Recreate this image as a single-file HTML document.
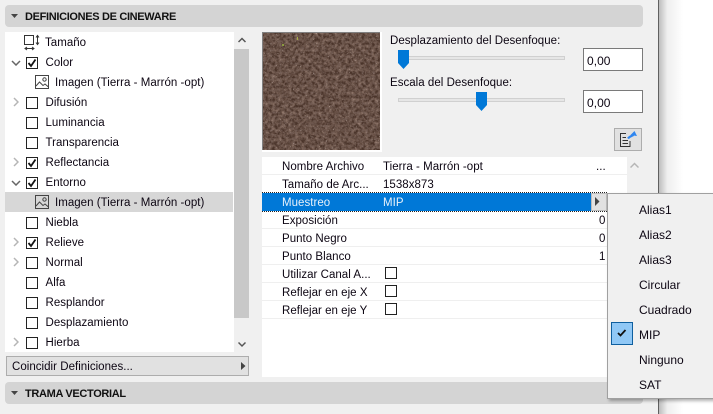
<!DOCTYPE html>
<html><head><meta charset="utf-8">
<style>
html,body{margin:0;padding:0}
body{width:713px;height:414px;overflow:hidden;position:relative;background:#fff;font-family:"Liberation Sans",sans-serif;font-size:11.5px;color:#0c0512}
div,span,svg{position:absolute;display:block}
.t{white-space:nowrap;line-height:14px;letter-spacing:.03px;margin-top:1px}
.hd{background:#d4d4d4;border-radius:4px;height:22px;left:5px;width:638px}
.hb{font-weight:bold;font-size:11px;left:25px;letter-spacing:-.33px;color:#111;line-height:14px;white-space:nowrap;margin-top:1px}
.cb{width:10px;height:10px;border:1px solid #222;background:#fff;left:26px;margin-top:1px}
.rl{left:262px;width:365px;height:1px;background:#efefef}
.n{left:282px}.v{left:383px}
.t.m{left:639px;font-size:12px;letter-spacing:0;margin-top:0}
</style></head><body>
<div style="left:0;top:0;width:658px;height:414px;background:#f0f0f0"></div>
<div style="left:658px;top:0;width:1px;height:414px;background:#606060"></div>
<div style="left:659px;top:0;width:24px;height:414px;background:linear-gradient(90deg,#bdbdbd,#efefef 35%,#fff)"></div>

<div class="hd" style="top:5px"></div>
<svg style="left:11px;top:14px" width="7" height="5"><path d="M0 0H7L3.5 4Z" fill="#444"/></svg>
<div class="hb" style="top:9px">DEFINICIONES DE CINEWARE</div>

<div style="left:5px;top:32px;width:229px;height:320px;background:#fff"></div>
<div style="left:234px;top:32px;width:15px;height:320px;background:#f0f0f0"></div>
<div style="left:234px;top:49px;width:15px;height:269px;background:#c8c8c8"></div>
<svg style="left:238px;top:37px" width="8" height="7"><path d="M.5 5L4 1.500L7.500 5" fill="none" stroke="#555" stroke-width="1.500"/></svg>
<svg style="left:238px;top:341px" width="8" height="7"><path d="M.5 1.500L4 5L7.500 1.500" fill="none" stroke="#555" stroke-width="1.500"/></svg>
<div style="left:5px;top:192px;width:228px;height:20px;background:#d7d7d7"></div>

<svg style="left:24px;top:34px" width="17" height="17" fill="none" stroke="#333"><rect x=".5" y="1.500" width="9" height="9"/><path d="M13.500 2V10M12 3.500L13.500 1.500L15 3.500M12 8.500L13.500 10.500L15 8.500M1 14.500H10M3 13L1 14.500L3 16M8 13L10 14.500L8 16"/></svg>
<div class="t" style="left:45px;top:35px">Tamaño</div>

<svg style="left:11px;top:60px" width="10" height="6"><path d="M1 1L5 5L9 1" fill="none" stroke="#666" stroke-width="1.500"/></svg>
<div class="cb" style="top:56px"></div>
<svg style="left:27px;top:58px" width="10" height="10"><path d="M1.500 5L4 8L8.500 1.500" fill="none" stroke="#111" stroke-width="1.800"/></svg>
<div class="t" style="left:45.500px;top:55px">Color</div>

<svg style="left:35px;top:75px" width="15" height="15" fill="none" stroke="#444"><rect x=".5" y=".5" width="13" height="13"/><circle cx="9.500" cy="4.500" r="1.700"/><path d="M1 11L4.500 7L8 10.500L10 9L13.500 12"/></svg>
<div class="t" style="left:55px;top:75px">Imagen (Tierra - Marrón -opt)</div>

<svg style="left:13px;top:97px" width="6" height="10"><path d="M1 1L5 5L1 9" fill="none" stroke="#b5b5b5" stroke-width="1.500"/></svg>
<div class="cb" style="top:96px"></div>
<div class="t" style="left:45.500px;top:95px">Difusión</div>

<div class="cb" style="top:116px"></div>
<div class="t" style="left:45.500px;top:115px">Luminancia</div>

<div class="cb" style="top:136px"></div>
<div class="t" style="left:45.500px;top:135px">Transparencia</div>

<svg style="left:13px;top:157px" width="6" height="10"><path d="M1 1L5 5L1 9" fill="none" stroke="#b5b5b5" stroke-width="1.500"/></svg>
<div class="cb" style="top:156px"></div>
<svg style="left:27px;top:158px" width="10" height="10"><path d="M1.500 5L4 8L8.500 1.500" fill="none" stroke="#111" stroke-width="1.800"/></svg>
<div class="t" style="left:45.500px;top:155px">Reflectancia</div>

<svg style="left:11px;top:180px" width="10" height="6"><path d="M1 1L5 5L9 1" fill="none" stroke="#666" stroke-width="1.500"/></svg>
<div class="cb" style="top:176px"></div>
<svg style="left:27px;top:178px" width="10" height="10"><path d="M1.500 5L4 8L8.500 1.500" fill="none" stroke="#111" stroke-width="1.800"/></svg>
<div class="t" style="left:45.500px;top:175px">Entorno</div>

<svg style="left:35px;top:195px" width="15" height="15" fill="none" stroke="#444"><rect x=".5" y=".5" width="13" height="13"/><circle cx="9.500" cy="4.500" r="1.700"/><path d="M1 11L4.500 7L8 10.500L10 9L13.500 12"/></svg>
<div class="t" style="left:55px;top:195px">Imagen (Tierra - Marrón -opt)</div>

<div class="cb" style="top:216px"></div>
<div class="t" style="left:45.500px;top:215px">Niebla</div>

<svg style="left:13px;top:237px" width="6" height="10"><path d="M1 1L5 5L1 9" fill="none" stroke="#b5b5b5" stroke-width="1.500"/></svg>
<div class="cb" style="top:236px"></div>
<svg style="left:27px;top:238px" width="10" height="10"><path d="M1.500 5L4 8L8.500 1.500" fill="none" stroke="#111" stroke-width="1.800"/></svg>
<div class="t" style="left:45.500px;top:235px">Relieve</div>

<svg style="left:13px;top:257px" width="6" height="10"><path d="M1 1L5 5L1 9" fill="none" stroke="#b5b5b5" stroke-width="1.500"/></svg>
<div class="cb" style="top:256px"></div>
<div class="t" style="left:45.500px;top:255px">Normal</div>

<div class="cb" style="top:276px"></div>
<div class="t" style="left:45.500px;top:275px">Alfa</div>

<div class="cb" style="top:296px"></div>
<div class="t" style="left:45.500px;top:295px">Resplandor</div>

<div class="cb" style="top:316px"></div>
<div class="t" style="left:45.500px;top:315px">Desplazamiento</div>

<svg style="left:13px;top:337px" width="6" height="10"><path d="M1 1L5 5L1 9" fill="none" stroke="#b5b5b5" stroke-width="1.500"/></svg>
<div class="cb" style="top:336px"></div>
<div class="t" style="left:45.500px;top:335px">Hierba</div>

<div style="left:6px;top:356px;width:241px;height:18px;background:#e1e1e1;border:1px solid #adadad"></div>
<div class="t" style="left:12px;top:359px">Coincidir Definiciones...</div>
<svg style="left:241px;top:362px" width="5" height="8"><path d="M0 0L4.500 4L0 8Z" fill="#444"/></svg>

<div class="hd" style="top:382px"></div>
<svg style="left:11px;top:391px" width="7" height="5"><path d="M0 0H7L3.500 4Z" fill="#444"/></svg>
<div class="hb" style="top:386px">TRAMA VECTORIAL</div>

<svg style="left:262px;top:32px" width="120" height="120">
<defs><filter id="n" x="0" y="0" width="100%" height="100%"><feTurbulence type="fractalNoise" baseFrequency=".3" numOctaves="3" seed="7"/><feColorMatrix values="0 0 0 0 .40  0 0 0 0 .28  0 0 0 0 .23  1.500 0 0 0 -.5"/></filter>
<filter id="d" x="0" y="0" width="100%" height="100%"><feTurbulence type="fractalNoise" baseFrequency=".45" numOctaves="2" seed="3"/><feColorMatrix values="0 0 0 0 .17  0 0 0 0 .11  0 0 0 0 .09  0 3 0 0 -1.350"/></filter>
<filter id="l" x="0" y="0" width="100%" height="100%"><feTurbulence type="fractalNoise" baseFrequency=".7" numOctaves="2" seed="11"/><feColorMatrix values="0 0 0 0 .62  0 0 0 0 .52  0 0 0 0 .47  0 0 5 0 -3.500"/></filter></defs>
<rect width="120" height="120" fill="#fff"/>
<rect width="118" height="118" fill="#808080"/>
<rect x="1" y="1" width="117" height="117" fill="#4a342a"/>
<rect x="1" y="1" width="117" height="117" filter="url(#n)"/>
<rect x="1" y="1" width="117" height="117" filter="url(#d)"/>
<rect x="1" y="1" width="117" height="117" filter="url(#l)"/>
<rect x="35" y="5" width="1" height="3" fill="#a8b040"/><rect x="20" y="12" width="2" height="2" fill="#8a9a40"/>
</svg>

<div class="t" style="left:390px;top:33px">Desplazamiento del Desenfoque:</div>
<div style="left:398px;top:56px;width:165px;height:2px;background:#e6e6e6;border:1px solid #d0d0d0"></div>
<svg style="left:398px;top:50px" width="12" height="19"><path d="M0 0H11V13L5.500 19L0 13Z" fill="#0078d7"/></svg>
<div style="left:583px;top:48px;width:58px;height:21px;background:#fff;border:1px solid #7a7a7a"></div>
<div class="t" style="left:587px;top:53px;font-size:12px">0,00</div>

<div class="t" style="left:390px;top:75px">Escala del Desenfoque:</div>
<div style="left:398px;top:98px;width:165px;height:2px;background:#e6e6e6;border:1px solid #d0d0d0"></div>
<svg style="left:476px;top:92px" width="12" height="19"><path d="M0 0H11V13L5.500 19L0 13Z" fill="#0078d7"/></svg>
<div style="left:583px;top:90px;width:58px;height:21px;background:#fff;border:1px solid #7a7a7a"></div>
<div class="t" style="left:587px;top:95px;font-size:12px">0,00</div>

<div style="left:614px;top:128px;width:26px;height:21px;background:#e1e1e1;border:1px solid #adadad"></div>
<svg style="left:619px;top:130px" width="20" height="18" fill="none"><path d="M7 3.500H1.500V16.500H11V11" stroke="#333"/><path d="M3.500 7.500H7M3.500 10.500H9M3.500 13.500H9" stroke="#333"/><path d="M9 8.500C10.500 6.500 12.500 6 14.500 5" stroke="#2f86f0" stroke-width="2.200"/><path d="M11.500 5L15.500 1L18 6Z" fill="#2f86f0"/></svg>

<div style="left:262px;top:157px;width:365px;height:220px;background:#fff"></div>
<div class="rl" style="top:174px"></div>
<div class="rl" style="top:228px"></div>
<div class="rl" style="top:246px"></div>
<div class="rl" style="top:264px"></div>
<div class="rl" style="top:282px"></div>
<div class="rl" style="top:300px"></div>
<div class="rl" style="top:318px"></div>
<div style="left:262px;top:193px;width:329px;height:18px;background:#0078d7"></div>
<div style="left:262px;top:192px;width:345px;height:0;border-top:1px dotted #222"></div>
<div style="left:262px;top:211px;width:345px;height:0;border-top:1px dotted #222"></div>
<div style="left:591px;top:193px;width:14px;height:16px;background:#e1e1e1;border:1px solid #bbb"></div>
<svg style="left:595px;top:197px" width="5" height="9"><path d="M0 0L4.500 4.500L0 9Z" fill="#444"/></svg>
<svg style="left:630px;top:162px" width="9" height="7"><path d="M.5 5.500L4.500 1.500L8.500 5.500" fill="none" stroke="#b5b5b5" stroke-width="1.500"/></svg>

<div class="t n" style="top:159px">Nombre Archivo</div>
<div class="t v" style="top:159px">Tierra - Marrón -opt</div>
<div class="t" style="left:596px;top:159px">...</div>
<div class="t n" style="top:177px">Tamaño de Arc...</div>
<div class="t v" style="top:177px">1538x873</div>
<div class="t n" style="top:195px;color:#e6f0fa">Muestreo</div>
<div class="t v" style="top:195px;color:#e6f0fa">MIP</div>
<div class="t n" style="top:213px">Exposición</div>
<div class="t" style="left:599px;top:213px">0</div>
<div class="t n" style="top:231px">Punto Negro</div>
<div class="t" style="left:599px;top:231px">0</div>
<div class="t n" style="top:249px">Punto Blanco</div>
<div class="t" style="left:599px;top:249px">1</div>
<div class="t n" style="top:267px">Utilizar Canal A...</div>
<div class="cb" style="left:385px;top:266px"></div>
<div class="t n" style="top:285px">Reflejar en eje X</div>
<div class="cb" style="left:385px;top:284px"></div>
<div class="t n" style="top:303px">Reflejar en eje Y</div>
<div class="cb" style="left:385px;top:302px"></div>

<div style="left:607px;top:193px;width:106px;height:204px;background:#f0f0f0;border:1px solid #a0a0a0;border-right:0;box-shadow:2px 2px 3px rgba(0,0,0,.3)"></div>
<div style="left:611px;top:322px;width:20px;height:21px;background:#90c8f6;border:1px solid #0f5f9f"></div>
<svg style="left:617px;top:329px" width="10" height="8"><path d="M1 4L3.500 6.500L8.500 1" fill="none" stroke="#111" stroke-width="1.800"/></svg>
<div class="t m" style="top:203px">Alias1</div>
<div class="t m" style="top:228px">Alias2</div>
<div class="t m" style="top:253px">Alias3</div>
<div class="t m" style="top:278px">Circular</div>
<div class="t m" style="top:303px">Cuadrado</div>
<div class="t m" style="top:328px">MIP</div>
<div class="t m" style="top:353px">Ninguno</div>
<div class="t m" style="top:378px">SAT</div>
</body></html>
